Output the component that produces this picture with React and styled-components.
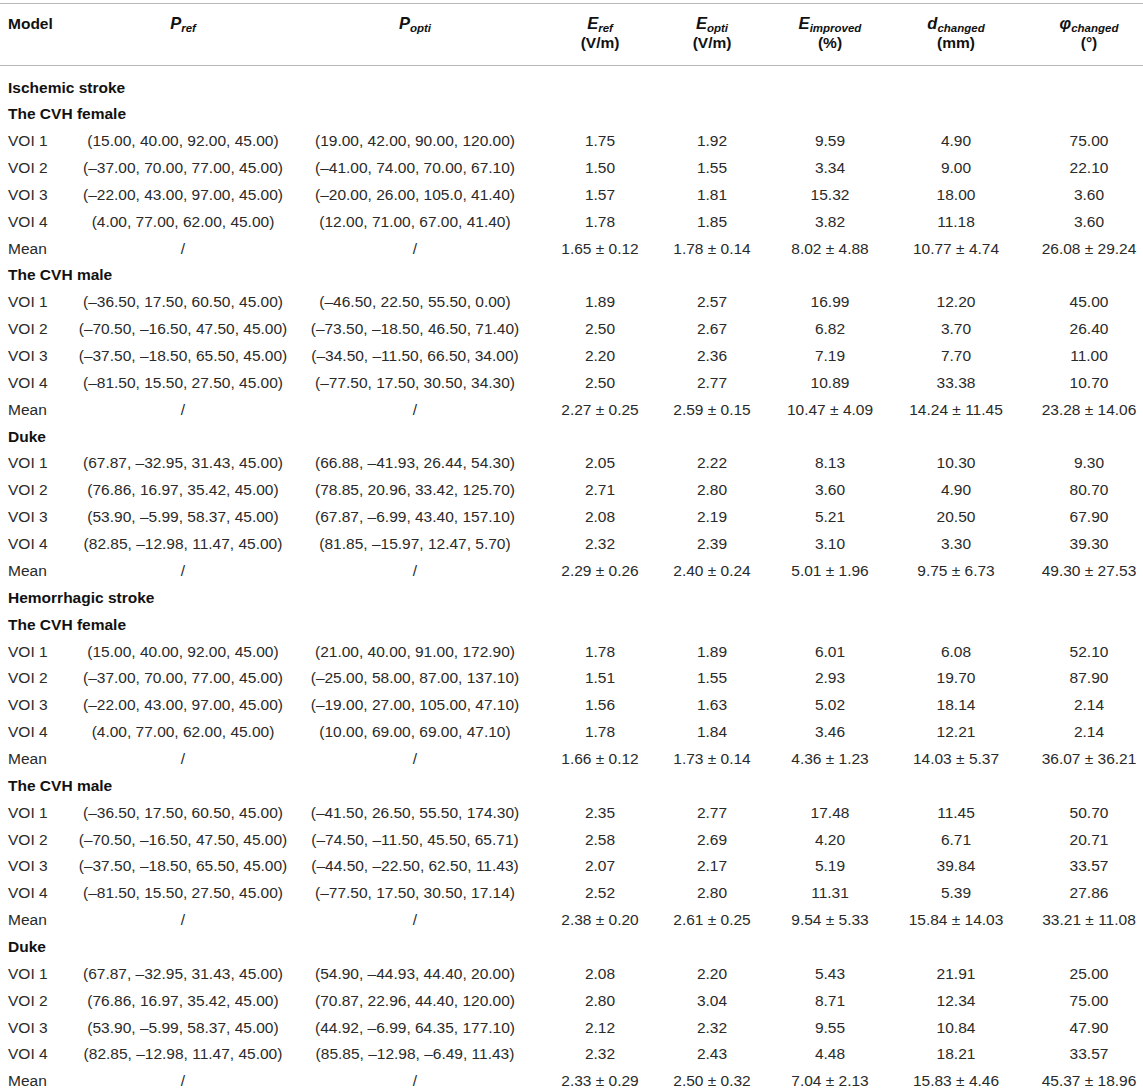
import React from "react";
import styled, { createGlobalStyle } from "styled-components";

const Global = createGlobalStyle`
  html, body { margin: 0; padding: 0; background: #fff; overflow: hidden; }
  body { font-family: "Liberation Sans", Arial, sans-serif; color: #2a2a2a; }
`;

const Wrap = styled.div`
  width: 1143px;
  overflow: hidden;
  padding-top: 3px;
`;

const Table = styled.table`
  width: 1163px;
  table-layout: fixed;
  border-collapse: collapse;
  font-size: 15.5px;
  border-top: 1.5px solid #b8b8b8;
`;

const Head = styled.thead`
  border-bottom: 1.5px solid #b8b8b8;
`;

const Th = styled.th`
  font-weight: 700;
  color: #111;
  line-height: 19px;
  padding: 10px 0 13px;
  vertical-align: top;
  text-align: ${(p) => (p.$left ? "left" : "center")};
  padding-left: ${(p) => (p.$left ? "8px" : "0")};
`;

const Sym = styled.span`
  font-style: italic;
  font-size: 16.5px;
`;

const Sub = styled.sub`
  font-size: 11.5px;
  font-style: italic;
  vertical-align: -3px;
  line-height: 0;
`;

const Tr = styled.tr``;

const Td = styled.td`
  box-sizing: border-box;
  height: ${(p) => (p.$first ? "35.4px" : "26.86px")};
  padding: 0;
  padding-top: ${(p) => (p.$first ? "8.5px" : "0")};
  line-height: 18px;
  white-space: nowrap;
  text-align: ${(p) => (p.$left ? "left" : "center")};
  padding-left: ${(p) => (p.$left ? "8px" : "0")};
  vertical-align: middle;
`;

const GroupCell = styled(Td)`
  font-weight: 700;
  color: #111;
`;

const cols = [75, 216, 248, 122, 102, 134, 118, 148];

const data = [
  {
    title: "Ischemic stroke",
    groups: [
      {
        name: "The CVH female",
        rows: [
          ["(15.00, 40.00, 92.00, 45.00)", "(19.00, 42.00, 90.00, 120.00)", "1.75", "1.92", "9.59", "4.90", "75.00"],
          ["(–37.00, 70.00, 77.00, 45.00)", "(–41.00, 74.00, 70.00, 67.10)", "1.50", "1.55", "3.34", "9.00", "22.10"],
          ["(–22.00, 43.00, 97.00, 45.00)", "(–20.00, 26.00, 105.0, 41.40)", "1.57", "1.81", "15.32", "18.00", "3.60"],
          ["(4.00, 77.00, 62.00, 45.00)", "(12.00, 71.00, 67.00, 41.40)", "1.78", "1.85", "3.82", "11.18", "3.60"],
        ],
        mean: [["1.65", "0.12"], ["1.78", "0.14"], ["8.02", "4.88"], ["10.77", "4.74"], ["26.08", "29.24"]],
      },
      {
        name: "The CVH male",
        rows: [
          ["(–36.50, 17.50, 60.50, 45.00)", "(–46.50, 22.50, 55.50, 0.00)", "1.89", "2.57", "16.99", "12.20", "45.00"],
          ["(–70.50, –16.50, 47.50, 45.00)", "(–73.50, –18.50, 46.50, 71.40)", "2.50", "2.67", "6.82", "3.70", "26.40"],
          ["(–37.50, –18.50, 65.50, 45.00)", "(–34.50, –11.50, 66.50, 34.00)", "2.20", "2.36", "7.19", "7.70", "11.00"],
          ["(–81.50, 15.50, 27.50, 45.00)", "(–77.50, 17.50, 30.50, 34.30)", "2.50", "2.77", "10.89", "33.38", "10.70"],
        ],
        mean: [["2.27", "0.25"], ["2.59", "0.15"], ["10.47", "4.09"], ["14.24", "11.45"], ["23.28", "14.06"]],
      },
      {
        name: "Duke",
        rows: [
          ["(67.87, –32.95, 31.43, 45.00)", "(66.88, –41.93, 26.44, 54.30)", "2.05", "2.22", "8.13", "10.30", "9.30"],
          ["(76.86, 16.97, 35.42, 45.00)", "(78.85, 20.96, 33.42, 125.70)", "2.71", "2.80", "3.60", "4.90", "80.70"],
          ["(53.90, –5.99, 58.37, 45.00)", "(67.87, –6.99, 43.40, 157.10)", "2.08", "2.19", "5.21", "20.50", "67.90"],
          ["(82.85, –12.98, 11.47, 45.00)", "(81.85, –15.97, 12.47, 5.70)", "2.32", "2.39", "3.10", "3.30", "39.30"],
        ],
        mean: [["2.29", "0.26"], ["2.40", "0.24"], ["5.01", "1.96"], ["9.75", "6.73"], ["49.30", "27.53"]],
      },
    ],
  },
  {
    title: "Hemorrhagic stroke",
    groups: [
      {
        name: "The CVH female",
        rows: [
          ["(15.00, 40.00, 92.00, 45.00)", "(21.00, 40.00, 91.00, 172.90)", "1.78", "1.89", "6.01", "6.08", "52.10"],
          ["(–37.00, 70.00, 77.00, 45.00)", "(–25.00, 58.00, 87.00, 137.10)", "1.51", "1.55", "2.93", "19.70", "87.90"],
          ["(–22.00, 43.00, 97.00, 45.00)", "(–19.00, 27.00, 105.00, 47.10)", "1.56", "1.63", "5.02", "18.14", "2.14"],
          ["(4.00, 77.00, 62.00, 45.00)", "(10.00, 69.00, 69.00, 47.10)", "1.78", "1.84", "3.46", "12.21", "2.14"],
        ],
        mean: [["1.66", "0.12"], ["1.73", "0.14"], ["4.36", "1.23"], ["14.03", "5.37"], ["36.07", "36.21"]],
      },
      {
        name: "The CVH male",
        rows: [
          ["(–36.50, 17.50, 60.50, 45.00)", "(–41.50, 26.50, 55.50, 174.30)", "2.35", "2.77", "17.48", "11.45", "50.70"],
          ["(–70.50, –16.50, 47.50, 45.00)", "(–74.50, –11.50, 45.50, 65.71)", "2.58", "2.69", "4.20", "6.71", "20.71"],
          ["(–37.50, –18.50, 65.50, 45.00)", "(–44.50, –22.50, 62.50, 11.43)", "2.07", "2.17", "5.19", "39.84", "33.57"],
          ["(–81.50, 15.50, 27.50, 45.00)", "(–77.50, 17.50, 30.50, 17.14)", "2.52", "2.80", "11.31", "5.39", "27.86"],
        ],
        mean: [["2.38", "0.20"], ["2.61", "0.25"], ["9.54", "5.33"], ["15.84", "14.03"], ["33.21", "11.08"]],
      },
      {
        name: "Duke",
        rows: [
          ["(67.87, –32.95, 31.43, 45.00)", "(54.90, –44.93, 44.40, 20.00)", "2.08", "2.20", "5.43", "21.91", "25.00"],
          ["(76.86, 16.97, 35.42, 45.00)", "(70.87, 22.96, 44.40, 120.00)", "2.80", "3.04", "8.71", "12.34", "75.00"],
          ["(53.90, –5.99, 58.37, 45.00)", "(44.92, –6.99, 64.35, 177.10)", "2.12", "2.32", "9.55", "10.84", "47.90"],
          ["(82.85, –12.98, 11.47, 45.00)", "(85.85, –12.98, –6.49, 11.43)", "2.32", "2.43", "4.48", "18.21", "33.57"],
        ],
        mean: [["2.33", "0.29"], ["2.50", "0.32"], ["7.04", "2.13"], ["15.83", "4.46"], ["45.37", "18.96"]],
      },
    ],
  },
];

function Header() {
  return (
    <Head>
      <tr>
        <Th $left>Model</Th>
        <Th>
          <Sym>P</Sym>
          <Sub>ref</Sub>
        </Th>
        <Th>
          <Sym>P</Sym>
          <Sub>opti</Sub>
        </Th>
        <Th>
          <Sym>E</Sym>
          <Sub>ref</Sub>
          <br />
          (V/m)
        </Th>
        <Th>
          <Sym>E</Sym>
          <Sub>opti</Sub>
          <br />
          (V/m)
        </Th>
        <Th>
          <Sym>E</Sym>
          <Sub>improved</Sub>
          <br />
          (%)
        </Th>
        <Th>
          <Sym>d</Sym>
          <Sub>changed</Sub>
          <br />
          (mm)
        </Th>
        <Th>
          <Sym>φ</Sym>
          <Sub>changed</Sub>
          <br />
          (°)
        </Th>
      </tr>
    </Head>
  );
}

export default function App() {
  let first = true;
  const rows = [];
  data.forEach((sec, si) => {
    rows.push(
      <Tr key={`s${si}`}>
        <GroupCell $left $first={first} colSpan={8}>
          {sec.title}
        </GroupCell>
      </Tr>
    );
    first = false;
    sec.groups.forEach((g, gi) => {
      rows.push(
        <Tr key={`g${si}-${gi}`}>
          <GroupCell $left colSpan={8}>
            {g.name}
          </GroupCell>
        </Tr>
      );
      g.rows.forEach((r, ri) => {
        rows.push(
          <Tr key={`r${si}-${gi}-${ri}`}>
            <Td $left>VOI {ri + 1}</Td>
            {r.map((v, ci) => (
              <Td key={ci}>{v}</Td>
            ))}
          </Tr>
        );
      });
      rows.push(
        <Tr key={`m${si}-${gi}`}>
          <Td $left>Mean</Td>
          <Td>/</Td>
          <Td>/</Td>
          {g.mean.map(([a, b], ci) => (
            <Td key={ci}>
              {a} ± {b}
            </Td>
          ))}
        </Tr>
      );
    });
  });

  return (
    <>
      <Global />
      <Wrap>
        <Table>
          <colgroup>
            {cols.map((w, i) => (
              <col key={i} style={{ width: w }} />
            ))}
          </colgroup>
          <Header />
          <tbody>{rows}</tbody>
        </Table>
      </Wrap>
    </>
  );
}
